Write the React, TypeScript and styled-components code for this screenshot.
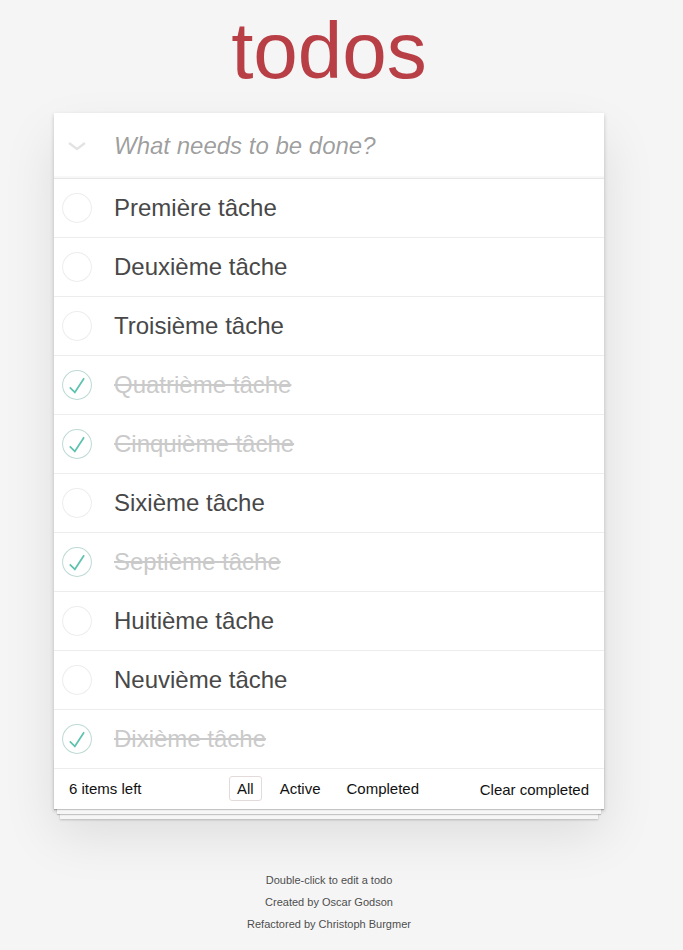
import { FC } from 'react';
import styled, { createGlobalStyle } from 'styled-components';

interface Todo {
  title: string;
  completed: boolean;
}

const todos: Todo[] = [
  { title: 'Première tâche', completed: false },
  { title: 'Deuxième tâche', completed: false },
  { title: 'Troisième tâche', completed: false },
  { title: 'Quatrième tâche', completed: true },
  { title: 'Cinquième tâche', completed: true },
  { title: 'Sixième tâche', completed: false },
  { title: 'Septième tâche', completed: true },
  { title: 'Huitième tâche', completed: false },
  { title: 'Neuvième tâche', completed: false },
  { title: 'Dixième tâche', completed: true },
];

const GlobalStyle = createGlobalStyle`
  html, body {
    margin: 0;
    padding: 0;
  }

  body {
    background: #f5f5f5;
    font-family: "Liberation Sans", Arial, sans-serif;
    font-size: 14px;
    line-height: 1.4em;
    color: #111;
    -webkit-font-smoothing: antialiased;
  }
`;

const Page = styled.div`
  width: 550px;
  margin: 0 0 0 54px;
  padding-top: 11px;
`;

const Title = styled.h1`
  margin: 0 0 22px 0;
  height: 80px;
  font-size: 80px;
  line-height: 80px;
  font-weight: 200;
  text-align: center;
  color: #b83f45;
`;

const TodoApp = styled.section`
  position: relative;
  background: #fff;
  box-shadow: 0 2px 4px 0 rgba(0, 0, 0, 0.2), 0 25px 50px 0 rgba(0, 0, 0, 0.1);
`;

const Header = styled.header`
  display: flex;
  align-items: center;
  height: 65px;
  box-shadow: inset 0 -2px 1px rgba(0, 0, 0, 0.03);
`;

const ToggleAll = styled.div`
  width: 60px;
  height: 65px;
  display: flex;
  align-items: center;
  padding-left: 13px;
  box-sizing: border-box;
`;

const Placeholder = styled.div`
  font-size: 24px;
  font-style: italic;
  line-height: 1.4em;
  color: rgba(0, 0, 0, 0.4);
`;

const List = styled.ul`
  margin: 0;
  padding: 0;
  list-style: none;
  border-top: 1px solid #e6e6e6;
`;

const Item = styled.li`
  display: flex;
  align-items: center;
  height: 58px;
  border-bottom: 1px solid #ededed;
`;

const Check = styled.div`
  width: 60px;
  display: flex;
  align-items: center;
  padding-left: 8px;
  box-sizing: border-box;
`;

const Label = styled.label<{ $done: boolean }>`
  font-size: 24px;
  line-height: 1.2;
  color: ${(p) => (p.$done ? '#cacaca' : '#484848')};
  text-decoration: ${(p) => (p.$done ? 'line-through' : 'none')};
`;

const Footer = styled.footer`
  position: relative;
  display: flex;
  align-items: center;
  justify-content: space-between;
  height: 40px;
  padding: 0 15px;
  font-size: 15px;
  color: #111;

  &:before {
    content: '';
    position: absolute;
    right: 0;
    bottom: 0;
    left: 0;
    height: 50px;
    overflow: hidden;
    box-shadow: 0 1px 1px rgba(0, 0, 0, 0.2), 0 8px 0 -3px #f6f6f6,
      0 9px 1px -3px rgba(0, 0, 0, 0.2), 0 16px 0 -6px #f6f6f6,
      0 17px 2px -6px rgba(0, 0, 0, 0.2);
  }
`;

const Count = styled.span`
  position: relative;
  width: 150px;
`;

const Filters = styled.ul`
  position: relative;
  display: flex;
  gap: 4px;
  margin: 0 0 0 -2px;
  padding: 0;
  list-style: none;
`;

const FilterLink = styled.a<{ $selected?: boolean }>`
  margin: 3px;
  padding: 3px 7px;
  border: 1px solid ${(p) => (p.$selected ? '#e3dada' : 'transparent')};
  border-radius: 3px;
  color: inherit;
  line-height: 18px;
  text-decoration: none;
`;

const ClearButton = styled.button`
  position: relative;
  width: 150px;
  margin: 0;
  padding: 0;
  border: 0;
  background: none;
  text-align: right;
  font-family: inherit;
  font-size: 15px;
  color: inherit;
`;

const Info = styled.footer`
  margin: 66px auto 0;
  color: #4d4d4d;
  font-size: 11px;
  text-shadow: 0 1px 0 rgba(255, 255, 255, 0.5);
  text-align: center;

  p {
    margin: 11px 0;
    line-height: 1;
  }
`;

const Circle: FC<{ done: boolean }> = ({ done }) => (
  <svg width="30" height="30" viewBox="-2 -2 104 104">
    <circle cx="50" cy="50" r="50" fill="none" stroke={done ? '#bddad5' : '#ededed'} strokeWidth="3.5" />
    {done && <path fill="#5dc2af" d="M72 25L42 71 27 56l-4 4 20 20 34-52z" />}
  </svg>
);

const Chevron = () => (
  <svg width="20" height="10" viewBox="0 0 20 10">
    <polyline points="2,2 10,8 18,2" fill="none" stroke="#e3e3e3" strokeWidth="2.2" />
  </svg>
);

const App = () => {
  const left = todos.filter((t) => !t.completed).length;

  return (
    <>
      <GlobalStyle />
      <Page>
        <Title>todos</Title>
        <TodoApp>
          <Header>
            <ToggleAll>
              <Chevron />
            </ToggleAll>
            <Placeholder>What needs to be done?</Placeholder>
          </Header>
          <List>
            {todos.map((t) => (
              <Item key={t.title}>
                <Check>
                  <Circle done={t.completed} />
                </Check>
                <Label $done={t.completed}>{t.title}</Label>
              </Item>
            ))}
          </List>
          <Footer>
            <Count>{left} items left</Count>
            <Filters>
              <li>
                <FilterLink href="#/" $selected>All</FilterLink>
              </li>
              <li>
                <FilterLink href="#/active">Active</FilterLink>
              </li>
              <li>
                <FilterLink href="#/completed">Completed</FilterLink>
              </li>
            </Filters>
            <ClearButton>Clear completed</ClearButton>
          </Footer>
        </TodoApp>
        <Info>
          <p>Double-click to edit a todo</p>
          <p>Created by Oscar Godson</p>
          <p>Refactored by Christoph Burgmer</p>
        </Info>
      </Page>
    </>
  );
};

export default App;
